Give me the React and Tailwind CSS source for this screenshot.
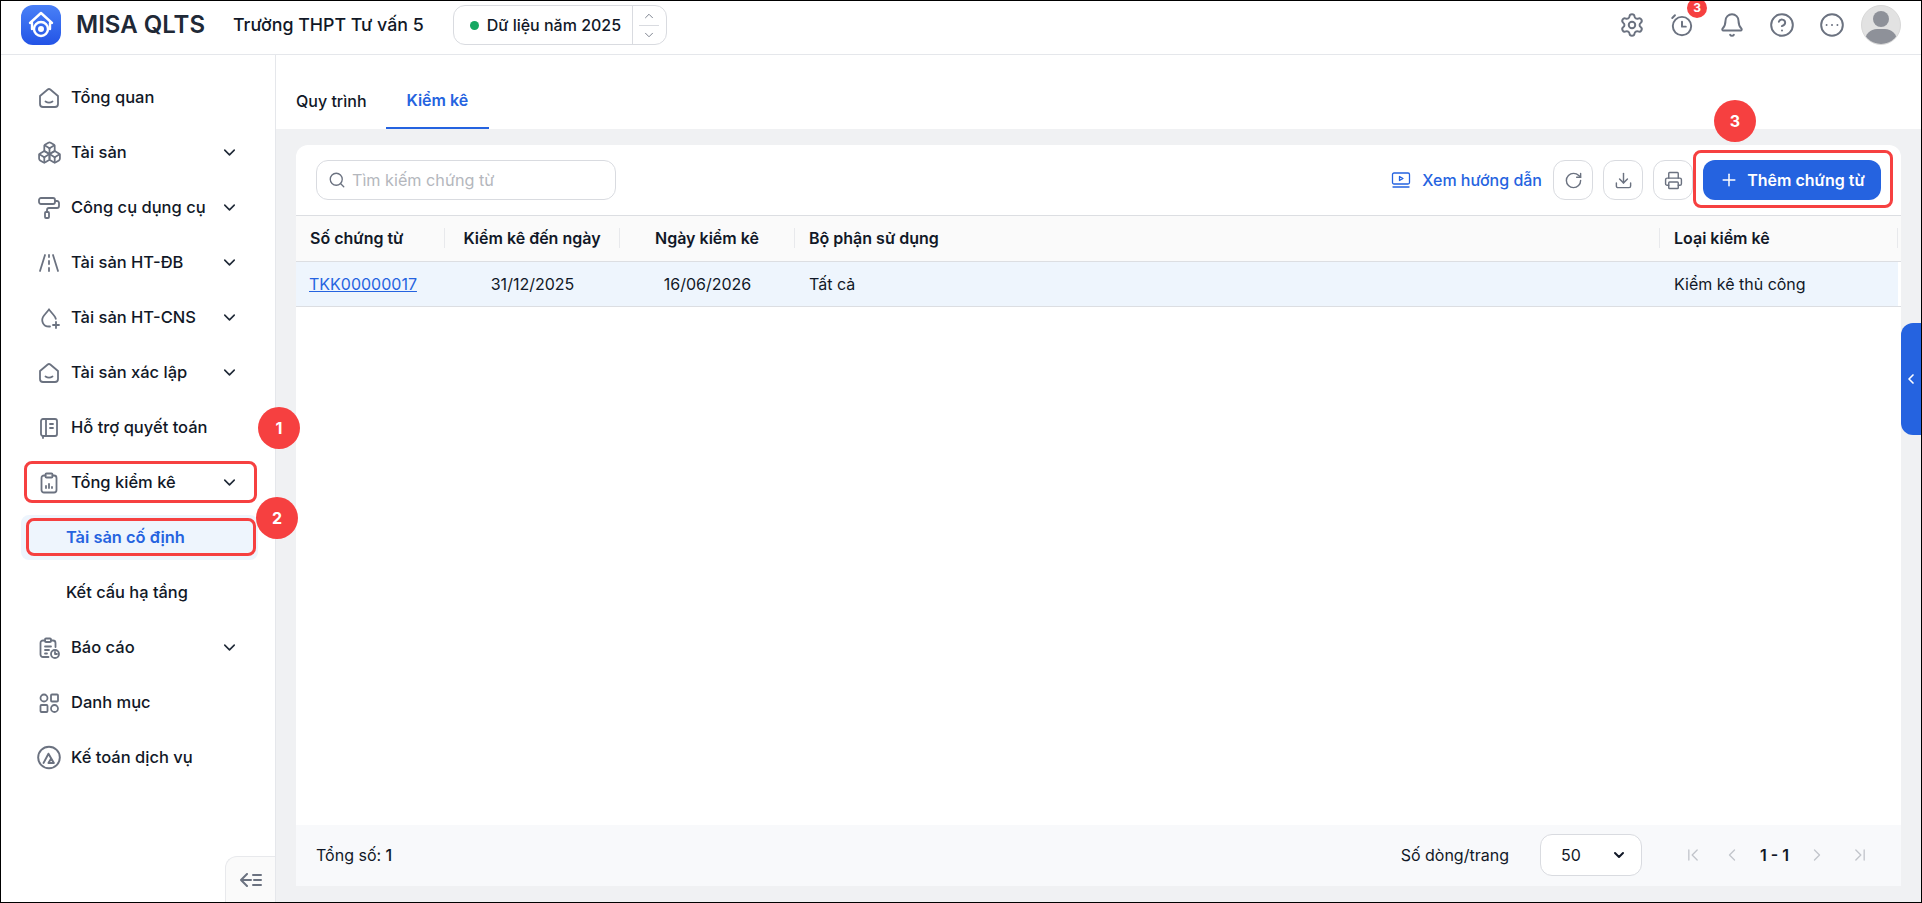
import React from "react";
import {
  Settings,
  Bell,
  CircleHelp,
  CircleEllipsis,
  RotateCw,
  Download,
  Printer,
  Plus,
  Search,
  ChevronDown,
  ChevronUp,
  ChevronLeft,
  ChevronRight,
  ChevronFirst,
  ChevronLast,
  Boxes,
  PaintRoller,
} from "lucide-react";

// sidebar icons that the icon packages don't have
const Svg = ({ children, size = 24 }) => (
  <svg width={size} height={size} viewBox="0 0 24 24" fill="none" stroke="currentColor" strokeWidth="1.8" strokeLinecap="round" strokeLinejoin="round">
    {children}
  </svg>
);

const HomeIcon = () => (
  <Svg>
    <path d="M3 10 10.700 3.500a2 2 0 0 1 2.600 0L21 10v8a3 3 0 0 1-3 3H6a3 3 0 0 1-3-3z" />
    <path d="M8.500 15.500c2 1.300 5 1.300 7 0" />
  </Svg>
);

const RoadIcon = () => (
  <Svg>
    <path d="M8 4 3 20" />
    <path d="m16 4 5 16" />
    <path d="M12 4v2M12 10v3M12 17v3" />
  </Svg>
);

const DropPlusIcon = () => (
  <Svg>
    <path d="M12 3.500 7 9.500c-3.800 4.800-1 11 5 11h1" />
    <path d="m12 3.500 5 6c.9 1.100 1.500 2.200 1.800 3.300" />
    <path d="M19 16v6M16 19h6" />
  </Svg>
);

const NotebookIcon = () => (
  <Svg>
    <rect x="4" y="3" width="16" height="17" rx="2" />
    <path d="M9 3v17M13 8h3M13 12h3M6 20v2" />
  </Svg>
);

const ClipboardChartIcon = () => (
  <Svg>
    <rect x="8.500" y="2.500" width="7" height="4" rx="1" />
    <path d="M8.500 4.500H7a2.500 2.500 0 0 0-2.500 2.500v12A2.500 2.500 0 0 0 7 21.500h10a2.500 2.500 0 0 0 2.500-2.500V7A2.500 2.500 0 0 0 17 4.500h-1.500" />
    <path d="M9 17v-2M12 17v-4M15 17v-1" />
  </Svg>
);

const ReportIcon = () => (
  <Svg>
    <rect x="8" y="2.500" width="6" height="3.500" rx="1" />
    <path d="M8 4.500H6a2.500 2.500 0 0 0-2.500 2.500v11.500A2.500 2.500 0 0 0 6 21h5.500" />
    <path d="M14 4.500h2a2.500 2.500 0 0 1 2.500 2.500v4" />
    <path d="M8 10.500h6M8 14h4M8 17.500h2" />
    <circle cx="18" cy="18" r="4" />
    <path d="M18 16v2h2" />
  </Svg>
);

const CatalogIcon = () => (
  <Svg>
    <circle cx="7" cy="7" r="3.500" />
    <rect x="14" y="3.500" width="7" height="7" rx="1" />
    <rect x="3.500" y="14" width="7" height="7" rx="1" />
    <circle cx="17.500" cy="17.500" r="3.500" />
  </Svg>
);

const AccountingIcon = () => (
  <Svg size={27}>
    <circle cx="12" cy="12" r="10" />
    <path d="M7 17 11.500 8.500l5 8.500h-5l2.500-4" />
  </Svg>
);

const AlarmIcon = () => (
  <svg width="26" height="26" viewBox="0 0 24 24" fill="none" stroke="currentColor" strokeWidth="1.800" strokeLinecap="round" strokeLinejoin="round">
    <circle cx="12" cy="13" r="8.500" />
    <path d="M12 9v4.500h3.500" />
    <path d="M3 5.500 5.500 3" />
  </svg>
);

const Logo = () => (
  <div className="flex h-10 w-10 items-center justify-center rounded-xl bg-gradient-to-b from-[#4a80f7] to-[#2353e6]">
    <svg width="28" height="30" viewBox="0 0 28 30" fill="none" stroke="#fff" strokeWidth="2.400" strokeLinejoin="round" strokeLinecap="round">
      <path d="M3 13 14 3l11 10" />
      <path d="M5 13v6" />
      <path d="M23 13v6" />
      <circle cx="14" cy="19" r="7" />
      <circle cx="14" cy="19" r="1.800" fill="#fff" />
    </svg>
  </div>
);

const Avatar = () => (
  <div className="relative h-10 w-10 overflow-hidden rounded-full border border-[#d8d8d8] bg-[#e2e2e2]">
    <div className="absolute left-[11px] top-[5px] h-4 w-4 rounded-full bg-[#8e9199]" />
    <div className="absolute left-[3px] top-[23px] h-6 w-8 rounded-full bg-[#8e9199]" />
  </div>
);

const menuItems = [
  { label: "Tổng quan", icon: <HomeIcon /> },
  { label: "Tài sản", icon: <Boxes size={25} strokeWidth={1.7} />, arrow: true },
  { label: "Công cụ dụng cụ", icon: <PaintRoller size={24} strokeWidth={1.8} />, arrow: true },
  { label: "Tài sản HT-ĐB", icon: <RoadIcon />, arrow: true },
  { label: "Tài sản HT-CNS", icon: <DropPlusIcon />, arrow: true },
  { label: "Tài sản xác lập", icon: <HomeIcon />, arrow: true },
  { label: "Hỗ trợ quyết toán", icon: <NotebookIcon /> },
  { label: "Tổng kiểm kê", icon: <ClipboardChartIcon />, arrow: true },
  { label: "Tài sản cố định", sub: true, active: true },
  { label: "Kết cấu hạ tầng", sub: true },
  { label: "Báo cáo", icon: <ReportIcon />, arrow: true },
  { label: "Danh mục", icon: <CatalogIcon /> },
  { label: "Kế toán dịch vụ", icon: <AccountingIcon /> },
];

const SidebarItem = ({ item }) => {
  if (item.sub) {
    return (
      <div className="flex h-[55px] items-center pl-5">
        <div className={`flex h-[45px] w-[237px] items-center rounded-lg pl-[45px] text-[16.4px] ${item.active ? "bg-[#eef5fd] font-semibold text-[#2563e0]" : "font-medium text-[#111827]"}`}>
          {item.label}
        </div>
      </div>
    );
  }
  return (
    <div className="flex h-[55px] items-center pl-[35px] pr-[36px] text-[16.5px] font-medium text-[#111827]">
      <span className="flex w-[35px] shrink-0 items-center text-[#6b7280]">
        <span className="flex w-[26px] justify-center">{item.icon}</span>
      </span>
      <span className="flex-1">{item.label}</span>
      {item.arrow && <ChevronDown size={19} strokeWidth={2} className="text-[#1f2937]" />}
    </div>
  );
};

const IconButton = ({ children }) => (
  <button className="flex h-10 w-10 items-center justify-center rounded-xl border border-[#d9dbe0] bg-white text-[#6b7280]">
    {children}
  </button>
);

const Marker = ({ n, className }) => (
  <div className={`absolute flex h-[42px] w-[42px] items-center justify-center rounded-full bg-[#f64040] text-base font-bold text-white ${className}`}>
    {n}
  </div>
);

const HeaderCell = ({ children, center }) => (
  <div className={`flex h-5 items-center border-r border-[#e8e9ec] ${center ? "justify-center" : "pl-[14px]"}`}>
    {children}
  </div>
);

const App = () => {
  return (
    <div className="relative flex h-[903px] w-[1922px] flex-col overflow-hidden border border-black bg-white font-['Inter',sans-serif] text-[#111827]">
      {/* Top bar */}
      <header className="flex h-[54px] shrink-0 items-center border-b border-[#e5e7eb] pb-[5px] pl-5 pr-5">
        <Logo />
        <span className="ml-[15px] text-2xl font-semibold text-[#1f2937]">MISA QLTS</span>
        <span className="ml-[28px] text-[17.800px] font-medium">Trường THPT Tư vấn 5</span>
        <div className="ml-[29px] flex h-10 w-[214px] items-center rounded-xl border border-[#d9dbe0]">
          <span className="ml-[16px] h-[9px] w-[9px] rounded-full bg-[#16a862]" />
          <span className="ml-[8px] flex-1 text-base font-medium">Dữ liệu năm 2025</span>
          <div className="flex h-full w-[34px] flex-col items-center justify-center border-l border-[#d9dbe0] text-[#6b7280]">
            <ChevronUp size={14} strokeWidth={1.5} />
            <div className="my-[2px] h-px w-5 bg-[#d9dbe0]" />
            <ChevronDown size={14} strokeWidth={1.5} />
          </div>
        </div>
        <div className="ml-auto flex items-center gap-6 text-[#6b7280]">
          <Settings size={26} strokeWidth={1.8} />
          <div className="relative">
            <AlarmIcon />
            <span className="absolute -right-[12px] -top-[14px] flex h-5 w-5 items-center justify-center rounded-full bg-[#f64040] text-xs font-bold text-white">3</span>
          </div>
          <Bell size={26} strokeWidth={1.8} />
          <CircleHelp size={26} strokeWidth={1.8} />
          <CircleEllipsis size={26} strokeWidth={1.8} />
          <div className="-ml-[8px]"><Avatar /></div>
        </div>
      </header>

      <div className="flex min-h-0 flex-1">
        {/* Sidebar */}
        <aside className="relative w-[275px] shrink-0 border-r border-[#e5e7eb] pt-[15px]">
          {menuItems.map((item) => (
            <SidebarItem key={item.label} item={item} />
          ))}
          <div className="absolute bottom-0 right-0 flex h-[46px] w-[50px] items-center justify-center rounded-tl-xl border-l border-t border-[#e8e9ec] bg-[#fafafa] text-[#6b7280]">
            <svg width="22" height="14" viewBox="0 0 22 14" fill="none" stroke="currentColor" strokeWidth="2" strokeLinecap="round" strokeLinejoin="round">
              <path d="M7 1 1 7l6 6M1 7h10M13 2h8M14 7h7M13 12h8" />
            </svg>
          </div>
        </aside>

        {/* Main */}
        <main className="flex min-w-0 flex-1 flex-col bg-[#f0f1f3]">
          <div className="flex h-[74px] shrink-0 bg-white">
            <div className="flex items-center py-0 pl-5 pr-[19px] pt-[17px] text-base font-medium">Quy trình</div>
            <div className="flex items-center border-b-2 border-[#2563e0] px-[21px] pt-[17px] text-base font-semibold text-[#2563e0]">Kiểm kê</div>
          </div>

          <div className="mx-5 mb-4 mt-4 flex min-h-0 flex-1 flex-col overflow-hidden rounded-t-xl bg-white">
            {/* Toolbar */}
            <div className="flex h-[70px] shrink-0 items-center justify-between pl-5 pr-[20px]">
              <div className="flex h-10 w-[300px] items-center gap-[6px] rounded-xl border border-[#d9dbe0] px-[11px] text-[16.200px] text-[#b4b7bd]">
                <Search size={18} strokeWidth={1.8} className="text-[#6b7280]" />
                Tìm kiếm chứng từ
              </div>
              <div className="flex items-center gap-[10px]">
                <div className="mr-[1px] flex items-center gap-[11px] text-base font-medium text-[#2563e0]">
                  <svg width="20" height="20" viewBox="0 0 20 20" fill="none" stroke="currentColor" strokeWidth="1.300" strokeLinejoin="round" strokeLinecap="round">
                    <rect x="1.500" y="3" width="17" height="11" rx="1.500" />
                    <path d="m8.500 6.500 3.500 2-3.500 2z" />
                    <path d="M2 17h16" />
                  </svg>
                  Xem hướng dẫn
                </div>
                <IconButton><RotateCw size={19} strokeWidth={1.8} /></IconButton>
                <IconButton><Download size={19} strokeWidth={1.8} /></IconButton>
                <IconButton><Printer size={19} strokeWidth={1.8} /></IconButton>
                <button className="flex h-10 w-[178px] items-center justify-center gap-2 rounded-xl bg-[#2563e0] text-base font-semibold text-white">
                  <Plus size={20} strokeWidth={1.8} />
                  Thêm chứng từ
                </button>
              </div>
            </div>

            {/* Table */}
            <div className="grid h-[47px] shrink-0 grid-cols-[149px_175px_175px_865px_238px_1fr] items-center border-y border-[#dcdee2] bg-[#fafafa] pb-[1px] text-base font-semibold">
              <HeaderCell>Số chứng từ</HeaderCell>
              <HeaderCell center>Kiểm kê đến ngày</HeaderCell>
              <HeaderCell center>Ngày kiểm kê</HeaderCell>
              <HeaderCell>Bộ phận sử dụng</HeaderCell>
              <HeaderCell>Loại kiểm kê</HeaderCell>
              <div />
            </div>
            <div className="grid h-[45px] shrink-0 grid-cols-[149px_175px_175px_865px_238px_1fr] items-center border-b border-[#dcdee2] text-base">
              <div className="flex h-full items-center bg-[#eef5fd] pl-[13px] text-[#2563e0] underline">TKK00000017</div>
              <div className="flex h-full items-center justify-center bg-[#eef5fd]">31/12/2025</div>
              <div className="flex h-full items-center justify-center bg-[#eef5fd]">16/06/2026</div>
              <div className="flex h-full items-center bg-[#eef5fd] pl-[14px]">Tất cả</div>
              <div className="flex h-full items-center bg-[#eef5fd] pl-[14px]">Kiểm kê thủ công</div>
              <div />
            </div>

            {/* Footer */}
            <div className="mt-auto flex h-[61px] shrink-0 items-center bg-[#f8f9fb] pb-[1px] pl-5 text-base">
              <span>Tổng số: <span className="font-medium">1</span></span>
              <div className="ml-auto flex items-center pr-[31px]">
                <span>Số dòng/trang</span>
                <div className="ml-[31px] flex h-[42px] w-[102px] items-center justify-between rounded-xl border border-[#d9dbe0] bg-white pl-[20px] pr-[14px]">
                  50
                  <ChevronDown size={16} strokeWidth={3} />
                </div>
                <div className="ml-[41px] flex items-center text-[#c2c5cb]">
                  <ChevronFirst size={20} strokeWidth={1.6} />
                  <ChevronLeft size={20} strokeWidth={1.6} className="ml-[19px]" />
                  <span className="mx-[18px] font-semibold text-[#111827]">1 - 1</span>
                  <ChevronRight size={20} strokeWidth={1.6} />
                  <ChevronLast size={20} strokeWidth={1.6} className="ml-[23px]" />
                </div>
              </div>
            </div>
          </div>
        </main>
      </div>

      {/* Drawer handle */}
      <div className="absolute right-0 top-[322px] flex h-[112px] w-5 items-center justify-center rounded-l-xl bg-[#2563e0] text-white">
        <ChevronLeft size={16} strokeWidth={2.5} />
      </div>

      {/* Annotation boxes and numbers drawn over the page */}
      <div className="absolute left-[23px] top-[460px] h-[42px] w-[233px] rounded-lg border-[3px] border-[#f64040]" />
      <div className="absolute left-[25px] top-[517px] h-[38px] w-[230px] rounded-lg border-[3px] border-[#f64040]" />
      <div className="absolute left-[1692px] top-[149px] h-[58px] w-[200px] rounded-lg border-[3px] border-[#f64040]" />
      <Marker n="1" className="left-[257px] top-[406px]" />
      <Marker n="2" className="left-[255px] top-[496px]" />
      <Marker n="3" className="left-[1713px] top-[99px]" />
    </div>
  );
};

export default App;
